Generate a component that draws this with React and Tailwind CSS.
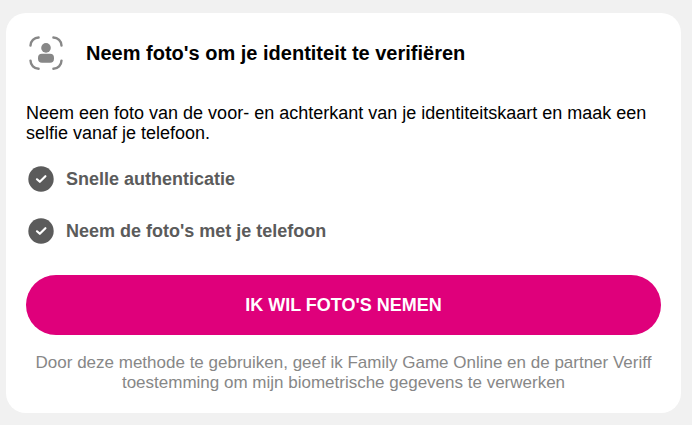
import React from 'react';

const features = ['Snelle authenticatie', "Neem de foto's met je telefoon"];

const FaceScanIcon = ({ className }) => (
  <svg viewBox="0 0 40 40" fill="none" className={className} aria-hidden="true">
    <g stroke="currentColor" strokeWidth="2.4" strokeLinecap="round">
      <path d="M4.5 12.6C4.5 8.2 8.2 4.5 12.6 4.5" />
      <path d="M27.4 4.5C31.8 4.5 35.5 8.2 35.5 12.6" />
      <path d="M35.5 27.6C35.5 32 31.8 35.7 27.4 35.7" />
      <path d="M12.6 35.7C8.2 35.7 4.5 32 4.5 27.6" />
    </g>
    <circle cx="20" cy="14.9" r="4.8" fill="currentColor" />
    <rect x="12" y="20.7" width="16" height="9" rx="4" fill="currentColor" />
  </svg>
);

const CheckBadge = ({ className }) => (
  <svg viewBox="0 0 30 30" fill="none" className={className} aria-hidden="true">
    <circle cx="15" cy="15" r="12.7" fill="currentColor" />
    <path
      d="M11 15.3L13.8 17.8L19.4 12.2"
      stroke="#ffffff"
      strokeWidth="2.2"
      strokeLinecap="round"
      strokeLinejoin="round"
    />
  </svg>
);

export default function App() {
  return (
    <main
      className="min-h-screen bg-[#f1f1f1] pt-[13px] pr-[11px] pb-3 pl-1.5 font-['Liberation_Sans',Arial,sans-serif] text-lg leading-5 text-black"
    >
      <section className="rounded-[20px] bg-white p-5">
        {/* Title */}
        <header className="flex items-center gap-5">
          <FaceScanIcon className="size-10 shrink-0 text-[#878787]" />
          <h1 className="text-xl leading-6 font-bold">Neem foto's om je identiteit te verifiëren</h1>
        </header>

        <p className="mt-[30px]">
          Neem een foto van de voor- en achterkant van je identiteitskaart en maak een selfie vanaf
          je telefoon.
        </p>

        {/* Benefits */}
        <ul className="mt-[21px] flex flex-col gap-[22px]">
          {features.map((feature) => (
            <li key={feature} className="flex items-center gap-2.5 font-bold text-[#5b5b5b]">
              <CheckBadge className="size-[30px] shrink-0" />
              {feature}
            </li>
          ))}
        </ul>

        <button
          type="button"
          className="mt-[29px] h-[60px] w-full cursor-pointer rounded-full bg-[#df007b] font-bold text-white uppercase"
        >
          Ik wil foto's nemen
        </button>

        <p className="mt-[18px] text-center text-[17px] leading-5 text-[#878787]">
          Door deze methode te gebruiken, geef ik Family Game Online en de partner Veriff
          toestemming om mijn biometrische gegevens te verwerken
        </p>
      </section>
    </main>
  );
}
